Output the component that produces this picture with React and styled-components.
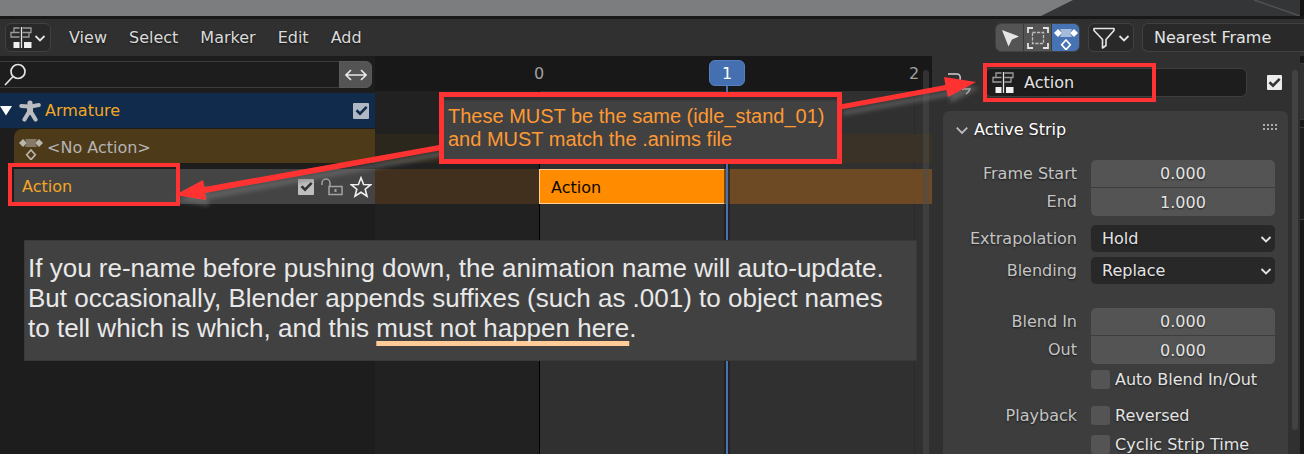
import React from "react";
import styled, { createGlobalStyle, css } from "styled-components";

const GlobalStyle = createGlobalStyle`
  *, *::before, *::after { box-sizing: border-box; }
  html, body { margin: 0; background: #1d1d1d; }
  button, input, select { font: inherit; color: inherit; margin: 0; padding: 0; border: 0; outline: 0; }
  svg { display: block; flex: none; }
`;

const ui = '"DejaVu Sans", Verdana, sans-serif';
const note = '"Liberation Sans", Arial, sans-serif';
const red = "#ff3333";

/* ---------- shell ---------- */

const Window = styled.main`
  position: relative;
  display: flex;
  flex-direction: column;
  height: 100vh;
  overflow: hidden;
  background: #181818;
  color: #e4e4e4;
  font: 16px/20px ${ui};
`;

const ViewportEdge = styled.div`
  flex: none;
  height: 19px;
  border-bottom: 3px solid #181818;
  background: #7c7d7f;
`;

const Header = styled.header`
  display: flex;
  flex: none;
  align-items: center;
  height: 37px;
  padding-left: 5px;
  background: #303030;
  text-shadow: 0 1px 2px rgba(0, 0, 0, 0.6);
`;

const Menus = styled.nav`
  display: flex;
  gap: 22px;
  margin-left: 18px;
  margin-right: auto;
`;

const MenuButton = styled.button`
  background: none;
  color: #dadada;
  text-shadow: inherit;
`;

const IconButton = styled.button`
  display: flex;
  align-items: center;
  justify-content: center;
  gap: 2px;
  width: 46px;
  height: 29px;
  border: 1px solid #414141;
  border-radius: 6px;
  background: #292929;
`;

const Tools = styled.div`
  display: flex;
  gap: 8px;
`;

const Segmented = styled.div`
  display: flex;
  gap: 1px;
  overflow: hidden;
  height: 29px;
  border: 1px solid #414141;
  border-radius: 6px;
  background: #3a3a3a;
`;

const Segment = styled.button`
  display: grid;
  place-items: center;
  width: 27px;
  background: ${(p) => (p.$on ? "#4772b3" : "#545454")};
`;

const SnapSelect = styled.select`
  appearance: none;
  width: 162px;
  height: 29px;
  padding-left: 11px;
  border: 1px solid #414141;
  border-right: 0;
  border-radius: 6px 0 0 6px;
  background: #292929;
`;

const Body = styled.div`
  display: flex;
  flex: 1;
  min-height: 0;
`;

/* ---------- channel list ---------- */

const Channels = styled.aside`
  flex: none;
  width: 375px;
  background: #1d1d1d;
`;

const SearchRow = styled.div`
  display: flex;
  align-items: center;
  height: 37px;
  padding-right: 3px;
`;

const SearchBox = styled.label`
  display: flex;
  flex: 1;
  align-items: center;
  height: 27px;
  padding-left: 4px;
  border: solid #3c3c3c;
  border-width: 1px 0;
`;

const SearchInput = styled.input`
  flex: 1;
  min-width: 0;
  padding-left: 6px;
  background: none;
`;

const SwapButton = styled.button`
  display: grid;
  place-items: center;
  width: 33px;
  height: 27px;
  border: 1px solid #5a5a5a;
  border-radius: 0 6px 6px 0;
  background: #545454;
`;

const Channel = styled.div`
  display: flex;
  align-items: center;
  height: 35px;
  padding-right: 6px;
  color: #b4b4b4;
  ${(p) => p.$kind === "object" && css`background: #102b4c; color: #f5a623;`}
  ${(p) => p.$kind === "action" && css`
    height: 34px;
    margin: 1px 0 6px 14px;
    padding: 4px 0 0 5px;
    border-radius: 8px 0 0 0;
    background: #4d3a18;
  `}
  ${(p) => p.$kind === "track" && css`
    margin-left: 14px;
    padding: 0 3px 0 8px;
    background: #444444;
    color: #f5a623;
  `}
`;

const ChannelName = styled.span`
  flex: 1;
  padding-left: ${(p) => p.$inset || 0}px;
`;

const TrackIcons = styled.span`
  display: flex;
  align-items: center;
  gap: 7px;
`;

const CheckWrap = styled.label`
  display: inline-grid;
  flex: none;
  align-items: center;
  grid-template-columns: auto;
  column-gap: 5px;
`;

const CheckText = styled.span`
  grid-area: 1 / 2;
`;

const CheckInput = styled.input`
  grid-area: 1 / 1;
  appearance: none;
  width: ${(p) => p.$size}px;
  height: ${(p) => p.$size}px;
  border-radius: ${(p) => (p.$size > 16 ? 3 : 1)}px;
  background: ${(p) => p.$fill};
`;

const CheckMark = styled.svg`
  grid-area: 1 / 1;
  justify-self: center;
  pointer-events: none;
`;

/* ---------- timeline ---------- */

/* One column before frame 0, one for each frame, and the remainder. */
const frames = "164fr 188fr 187fr 18fr";

const Timeline = styled.section`
  position: relative;
  flex: 1;
  min-width: 0;
  background: #212121;
`;

const FrameGrid = styled.div`
  position: absolute;
  inset: 0;
  display: grid;
  grid-template-columns: ${frames};
`;

const FrameColumn = styled.div`
  background: ${(p) => (p.$active ? "#303030" : "#212121")};
  border-left: ${(p) => (p.$line ? `1px solid ${p.$line}` : "0")};
`;

const Ruler = styled.div`
  position: relative;
  display: grid;
  grid-template-columns: ${frames};
  align-items: center;
  height: 35px;
  padding-top: 1px;
  background: #181818;
  color: #a0a0a0;
`;

const Tick = styled.span`
  grid-column: ${(p) => p.$column};
  justify-self: start;
  transform: translateX(-50%);
`;

const Lane = styled.div`
  position: relative;
  display: grid;
  grid-template-columns: ${frames};
  height: ${(p) => (p.$strip ? 35 : 29)}px;
  margin-top: ${(p) => (p.$strip ? 6 : 43)}px;
  background: ${(p) => (p.$strip ? "#42301e" : "#2b271d")};
`;

const LaneRange = styled.div`
  grid-area: 1 / 2 / 2 / 5;
  background: ${(p) => (p.$strip ? "#6d4a24" : "#3a3226")};
`;

const Strip = styled.button`
  grid-area: 1 / 2;
  padding: 3px 0 0 11px;
  border: 1px solid #ffd09a;
  background: #ff8c00;
  color: #0c0700;
  text-align: left;
`;

const Playhead = styled.div`
  position: absolute;
  inset: 4px 0 0;
  display: grid;
  grid-template-columns: ${frames};
  grid-template-rows: 26px 1fr;
  pointer-events: none;
`;

const PlayheadFrame = styled.output`
  grid-area: 1 / 3;
  width: 36px;
  margin-left: -18px;
  border: 1px solid #557fbd;
  border-radius: 6px;
  background: #4470b2;
  color: #ffffff;
  line-height: 26px;
  text-align: center;
`;

const PlayheadLine = styled.div`
  grid-area: 2 / 3;
  width: 6px;
  margin-left: -3px;
  border: solid rgba(25, 25, 25, 0.6);
  border-width: 0 2px;
  background: #4772b3;
  background-clip: padding-box;
`;

const TimelineScroll = styled.div`
  position: absolute;
  top: 14px;
  right: 3px;
  bottom: 0;
  width: 6px;
  border-radius: 3px 3px 0 0;
  background: rgba(75, 75, 75, 0.5);
`;

/* ---------- sidebar ---------- */

const Sidebar = styled.aside`
  display: flex;
  flex: none;
  width: 368px;
  background: #303030;
  text-shadow: 0 1px 2px rgba(0, 0, 0, 0.6);
`;

const SidebarMain = styled.div`
  flex: 1;
  min-width: 0;
  padding-left: 11px;
`;

const NameRow = styled.div`
  display: flex;
  align-items: center;
  height: 55px;
  padding: 0 6px 2px 4px;
`;

const NameBox = styled.label`
  display: flex;
  flex: 1;
  align-items: center;
  gap: 10px;
  height: 29px;
  margin: 0 20px 0 14px;
  padding-left: 6px;
  border: 1px solid #3f3f3f;
  border-radius: 6px;
  background: #1d1d1d;
`;

const NameInput = styled.input`
  width: 100%;
  min-width: 0;
  background: none;
  text-shadow: inherit;
`;

const Panel = styled.section`
  height: 400px;
  padding: 0 13px 0 12px;
  border-radius: 6px 6px 0 0;
  background: #3d3d3d;
`;

const PanelTitle = styled.h2`
  display: flex;
  align-items: center;
  gap: 5px;
  height: 38px;
  margin: 0 0 11px;
  color: #ffffff;
  font: inherit;
`;

const Grip = styled.svg`
  margin-left: auto;
  margin-right: -3px;
  margin-bottom: 4px;
`;

const Row = styled.div`
  display: grid;
  grid-template-columns: 1fr 184px;
  align-items: center;
  column-gap: 14px;
  height: ${(p) => p.$height || 29}px;
  margin-bottom: ${(p) => p.$after || 0}px;
`;

const RowLabel = styled.label`
  color: #c4c4c4;
  text-align: right;
  white-space: nowrap;
`;

const NumberInput = styled.input`
  grid-column: 2;
  align-self: start;
  width: 100%;
  height: ${(p) => (p.$last ? 28 : 27)}px;
  border-radius: ${(p) => (p.$last ? "0 0 5px 5px" : "5px 5px 0 0")};
  background: #545454;
  text-align: center;
  text-shadow: inherit;
`;

const SelectWrap = styled.div`
  display: grid;
  align-items: center;
`;

const Dropdown = styled.select`
  grid-area: 1 / 1;
  appearance: none;
  height: 27px;
  padding-left: 11px;
  border-radius: 5px;
  background: #282828;
  text-shadow: inherit;
`;

const DropdownArrow = styled.span`
  grid-area: 1 / 1;
  justify-self: end;
  padding-right: 3px;
  pointer-events: none;
`;

const CheckCell = styled.div`
  display: flex;
  grid-column: 2;
`;

const Scrollbar = styled.div`
  flex: none;
  width: 6px;
  height: 360px;
  margin: 14px 2px 0 4px;
  border-radius: 3px;
  background: #424242;
`;

const NextEditor = styled.div`
  flex: none;
  width: 4px;
  padding-top: 7px;
`;

const NextBlock = styled.div`
  height: ${(p) => p.$height}px;
  margin-bottom: 7px;
  border-top: 1px solid #3a3a3a;
  border-bottom: 1px solid #3a3a3a;
  background: ${(p) => p.$fill};
`;

/* ---------- annotations over the editor ---------- */

const Arrows = styled.svg`
  position: absolute;
  top: 0;
  left: 0;
  pointer-events: none;
`;

const Highlight = styled.div`
  position: absolute;
  left: ${(p) => p.$x}px;
  top: ${(p) => p.$y}px;
  width: ${(p) => p.$w}px;
  height: ${(p) => p.$h}px;
  border: 4px solid ${red};
  pointer-events: none;
`;

const Callout = styled.p`
  position: absolute;
  left: 439px;
  top: 92px;
  width: 403px;
  height: 72px;
  margin: 0;
  padding: 8px 4px;
  border: 5px solid ${red};
  background: #414141;
  box-shadow: inset 0 4px 2px -1px #303030;
  color: #ff9933;
  font: 20px/23px ${note};
  white-space: nowrap;
`;

const Note = styled.p`
  position: absolute;
  left: 24px;
  top: 240px;
  width: 893px;
  height: 121px;
  margin: 0;
  padding: 12px 3px;
  border: 1px solid #393939;
  background: #414141;
  color: #e8e8e8;
  font: 26px/30px ${note};
  white-space: nowrap;
`;

const Underlined = styled.span`
  text-decoration: underline 5px #ffcb96;
  text-decoration-skip-ink: none;
  text-underline-offset: 4px;
`;

/* ---------- icons ---------- */

const Chevron = ({ size = 12, color = "#e4e4e4", width = 1.8 }) => (
  <svg width={size} height={size} viewBox="0 0 12 12" fill="none" stroke={color} strokeWidth={width}>
    <path d="M1.5 4 6 8.5 10.5 4" />
  </svg>
);

const NlaIcon = () => (
  <svg width="22" height="22" viewBox="0 0 22 22" fill="none">
    <g stroke="#9b9b9b" strokeWidth="1.3">
      <path d="M9.5 1H4v4.5M9.5 5.5H1V10h8.5M12.5 1H21v4.5h-8.5M19 5.5V10h-6.5" />
    </g>
    <path d="M11.5 0v21" stroke="#e4e4e4" strokeWidth="1.3" />
    <path d="M3.5 15h6v6h-6zM14 15h7.5v6H14z" fill="#f0f0f0" />
  </svg>
);

const KeyIcon = ({ color = "#ffffff", mid = "#a5bbdc" }) => (
  <svg width="24" height="24" viewBox="0 0 24 24">
    <path d="M6 3h12l-2 4 2 4H6l2-4z" fill={mid} />
    <path d="M4 3 8 7l-4 4-4-4zM20 3 24 7l-4 4-4-4z" fill={color} />
    <path d="M12 14l4.3 4.8-4.3 4.8-4.300-4.8z" fill="none" stroke={color} strokeWidth="1.7" />
  </svg>
);

const CursorIcon = () => (
  <svg width="22" height="22" viewBox="0 0 22 22">
    <path d="M3 3 20 9.5 13 12.5 9.5 19.5z" fill="#e6e6e6" />
  </svg>
);

const BoxSelectIcon = () => (
  <svg width="22" height="22" viewBox="0 0 22 22" fill="none" stroke="#e4e4e4">
    <path d="M1 6V1h5M16 1h5v5M21 16v5h-5M6 21H1v-5" strokeWidth="1.8" />
    <rect x="5.500" y="5.500" width="11" height="11" strokeWidth="1.3" strokeDasharray="3.2 1.3" stroke="#bdbdbd" />
  </svg>
);

const FilterIcon = () => (
  <svg width="24" height="24" viewBox="0 0 24 24" fill="none" stroke="#e6e6e6" strokeWidth="1.6" strokeLinejoin="round">
    <path d="M2 2.5h20v2L14 13.5v6L10.5 22v-8.500L2 4.500z" />
  </svg>
);

const SearchIcon = () => (
  <svg width="23" height="23" viewBox="0 0 23 23" fill="none" stroke="#e4e4e4" strokeWidth="1.7">
    <circle cx="14" cy="8.5" r="7" />
    <path d="M9 13.5 1 22" />
  </svg>
);

const SwapIcon = () => (
  <svg width="22" height="12" viewBox="0 0 22 12" fill="none" stroke="#e8e8e8" strokeWidth="1.6">
    <path d="M1 6h20M6 1 1 6l5 5M16 1l5 5-5 5" />
  </svg>
);

const ArmatureIcon = () => (
  <svg width="22" height="22" viewBox="0 0 22 22" fill="none" stroke="#b9bcc0" strokeLinecap="round">
    <circle cx="11" cy="3" r="2.6" fill="#b9bcc0" stroke="none" />
    <path d="M2.2 6 10 6.500h2l7.800-1.500" strokeWidth="4" />
    <path d="M11 7v5" strokeWidth="6" />
    <path d="M10 12 5.500 19.500M12 12l4.500 7.500" strokeWidth="4.200" />
  </svg>
);

const LockIcon = () => (
  <svg width="22" height="18" viewBox="0 0 22 18" fill="none" stroke="#a2a2a2" strokeWidth="1.5">
    <path d="M1 7V5a4 4 0 0 1 8 0v4" />
    <rect x="8" y="8.5" width="13" height="8" />
    <path d="M14.5 11v3" strokeWidth="2" />
  </svg>
);

const StarIcon = () => (
  <svg width="22" height="22" viewBox="0 0 22 22" fill="none" stroke="#f0f0f0" strokeWidth="1.6">
    <path d="M11 1.8l2.6 6.7 7 .3-5.4 4.4 1.8 7L11 16.3l-6 3.9 1.8-7L1.4 8.8l7-.3z" />
  </svg>
);

const PinIcon = () => (
  <svg width="24" height="24" viewBox="0 0 24 24" fill="none" stroke="#d0d0d0" strokeWidth="1.5">
    <path d="M1 3h9q4 0 3 6M15 18h8q-1 3-4 5" />
  </svg>
);

/* ---------- parts ---------- */

function Check({ id, label, text, size = 15, fill = "#bfbfbf", mark = "#333333", checked = true }) {
  return (
    <CheckWrap htmlFor={id}>
      <CheckInput id={id} type="checkbox" defaultChecked={checked} aria-label={label} $size={size} $fill={fill} />
      {checked && (
        <CheckMark width="13" height="13" viewBox="0 0 13 13" fill="none" stroke={mark} strokeWidth="2.6">
          <path d="M1.5 6.2 5 9.6 11.7 2.8" />
        </CheckMark>
      )}
      {text && <CheckText>{text}</CheckText>}
    </CheckWrap>
  );
}

function NumberRow({ id, label, value, last, after }) {
  return (
    <Row $height={28} $after={after}>
      <RowLabel htmlFor={id}>{label}</RowLabel>
      <NumberInput id={id} defaultValue={value} $last={last} />
    </Row>
  );
}

function SelectRow({ id, label, value, after }) {
  return (
    <Row $height={27} $after={after}>
      <RowLabel htmlFor={id}>{label}</RowLabel>
      <SelectWrap>
        <Dropdown id={id} defaultValue={value}>
          <option>{value}</option>
        </Dropdown>
        <DropdownArrow><Chevron /></DropdownArrow>
      </SelectWrap>
    </Row>
  );
}

function CheckRow({ id, text, label, after }) {
  return (
    <Row $after={after}>
      {label && <RowLabel as="span">{label}</RowLabel>}
      <CheckCell>
        <Check id={id} text={text} size={19} fill="#545454" checked={false} />
      </CheckCell>
    </Row>
  );
}

export default function App() {
  return (
    <Window>
      <GlobalStyle />
      <ViewportEdge>
        <svg width="100%" height="16" viewBox="0 0 1304 16" preserveAspectRatio="xMaxYMin slice">
          <path d="M1073 0H1304V16H1041z" fill="#343536" />
          <path d="M1254 0 1300 16" stroke="#525252" strokeWidth="1.5" />
          <path d="M1300 0h4v16h-4z" fill="#141414" />
        </svg>
      </ViewportEdge>

      <Header>
        <IconButton aria-label="Editor type"><NlaIcon /><Chevron /></IconButton>
        <Menus>
          {["View", "Select", "Marker", "Edit", "Add"].map((m) => <MenuButton key={m}>{m}</MenuButton>)}
        </Menus>
        <Tools>
          <Segmented>
            <Segment aria-label="Only selected"><CursorIcon /></Segment>
            <Segment aria-label="Show hidden"><BoxSelectIcon /></Segment>
            <Segment aria-label="Show keyframes" $on><KeyIcon /></Segment>
          </Segmented>
          <IconButton aria-label="Filter"><FilterIcon /><Chevron /></IconButton>
          <SnapSelect aria-label="Snapping" defaultValue="Nearest Frame">
            <option>Nearest Frame</option>
          </SnapSelect>
        </Tools>
      </Header>

      <Body>
        <Channels>
          <SearchRow>
            <SearchBox>
              <SearchIcon />
              <SearchInput type="text" aria-label="Search channels" />
            </SearchBox>
            <SwapButton aria-label="Invert"><SwapIcon /></SwapButton>
          </SearchRow>
          <Channel $kind="object">
            <svg width="19" height="10" viewBox="0 0 19 10"><path d="M0 0h12L6 9.5z" fill="#ffffff" /></svg>
            <ArmatureIcon />
            <ChannelName $inset={4}>Armature</ChannelName>
            <Check id="armature-on" label="Armature" size={16} fill="#b0b8c3" mark="#102b4c" />
          </Channel>
          <Channel $kind="action">
            <KeyIcon color="#b9b5ad" mid="#857a66" />
            <ChannelName $inset={4}>&lt;No Action&gt;</ChannelName>
          </Channel>
          <Channel $kind="track">
            <ChannelName>Action</ChannelName>
            <TrackIcons>
              <Check id="track-on" label="Action track" size={16} />
              <LockIcon />
              <StarIcon />
            </TrackIcons>
          </Channel>
        </Channels>

        <Timeline>
          <FrameGrid>
            <FrameColumn />
            <FrameColumn $active $line="#000000" />
            <FrameColumn $active />
            <FrameColumn $active $line="#292929" />
          </FrameGrid>
          <Ruler>
            <Tick $column={2}>0</Tick>
            <Tick $column={4}>2</Tick>
          </Ruler>
          <Lane><LaneRange /></Lane>
          <Lane $strip>
            <LaneRange $strip />
            <Strip>Action</Strip>
          </Lane>
          <Playhead>
            <PlayheadLine />
            <PlayheadFrame>1</PlayheadFrame>
          </Playhead>
          <TimelineScroll />
        </Timeline>

        <Sidebar>
          <SidebarMain>
            <NameRow>
              <PinIcon />
              <NameBox>
                <NlaIcon />
                <NameInput aria-label="Strip name" defaultValue="Action" />
              </NameBox>
              <Check id="strip-on" label="Strip enabled" fill="#ececec" />
            </NameRow>
            <Panel>
              <PanelTitle>
                <Chevron size={14} color="#bdbdbd" width={1.5} />
                Active Strip
                <Grip width="15" height="8" viewBox="0 0 15 8">
                  {[0, 4, 8, 12].map((x) => (
                    <path key={x} d={`M${x} 0h2v2h-2zM${x} 4h2v2h-2z`} fill="#aaaaaa" />
                  ))}
                </Grip>
              </PanelTitle>
              <NumberRow id="frame-start" label="Frame Start" value="0.000" />
              <NumberRow id="frame-end" label="End" value="1.000" last after={9} />
              <SelectRow id="extrapolation" label="Extrapolation" value="Hold" after={5} />
              <SelectRow id="blending" label="Blending" value="Replace" after={24} />
              <NumberRow id="blend-in" label="Blend In" value="0.000" />
              <NumberRow id="blend-out" label="Out" value="0.000" last after={1} />
              <CheckRow id="auto-blend" text="Auto Blend In/Out" after={7} />
              <CheckRow id="reversed" text="Reversed" label="Playback" />
              <CheckRow id="cyclic" text="Cyclic Strip Time" />
            </Panel>
          </SidebarMain>
          <Scrollbar />
        </Sidebar>
        <NextEditor>
          <NextBlock $height={57} $fill="#303030" />
          <NextBlock $height={93} $fill="#1d1d1d" />
        </NextEditor>
      </Body>

      <Note>
        If you re-name before pushing down, the animation name will auto-update.<br />
        But occasionally, Blender appends suffixes (such as .001) to object names<br />
        to tell which is which, and this <Underlined>must not happen here</Underlined>.
      </Note>
      <Highlight $x={8} $y={163} $w={172} $h={43} />
      <Highlight $x={983} $y={63} $w={173} $h={39} />
      <Arrows width="1000" height="220" viewBox="0 0 1000 220">
        <defs>
          <filter id="drop" x="-10%" y="-30%" width="120%" height="180%">
            <feDropShadow dx="3" dy="6" stdDeviation="2" floodColor="#777777" floodOpacity="0.55" />
          </filter>
        </defs>
        <g fill={red} filter="url(#drop)">
          <path d="M442 144.500 204.500 187 203 180 175 195 206 200 205 193 442 150z" />
          <path d="M840 104.500 945.500 85 944 77 976 82 948 97 946.500 90 840 109.500z" />
        </g>
      </Arrows>
      <Callout>
        These MUST be the same (idle_stand_01)<br />
        and MUST match the .anims file
      </Callout>
    </Window>
  );
}
